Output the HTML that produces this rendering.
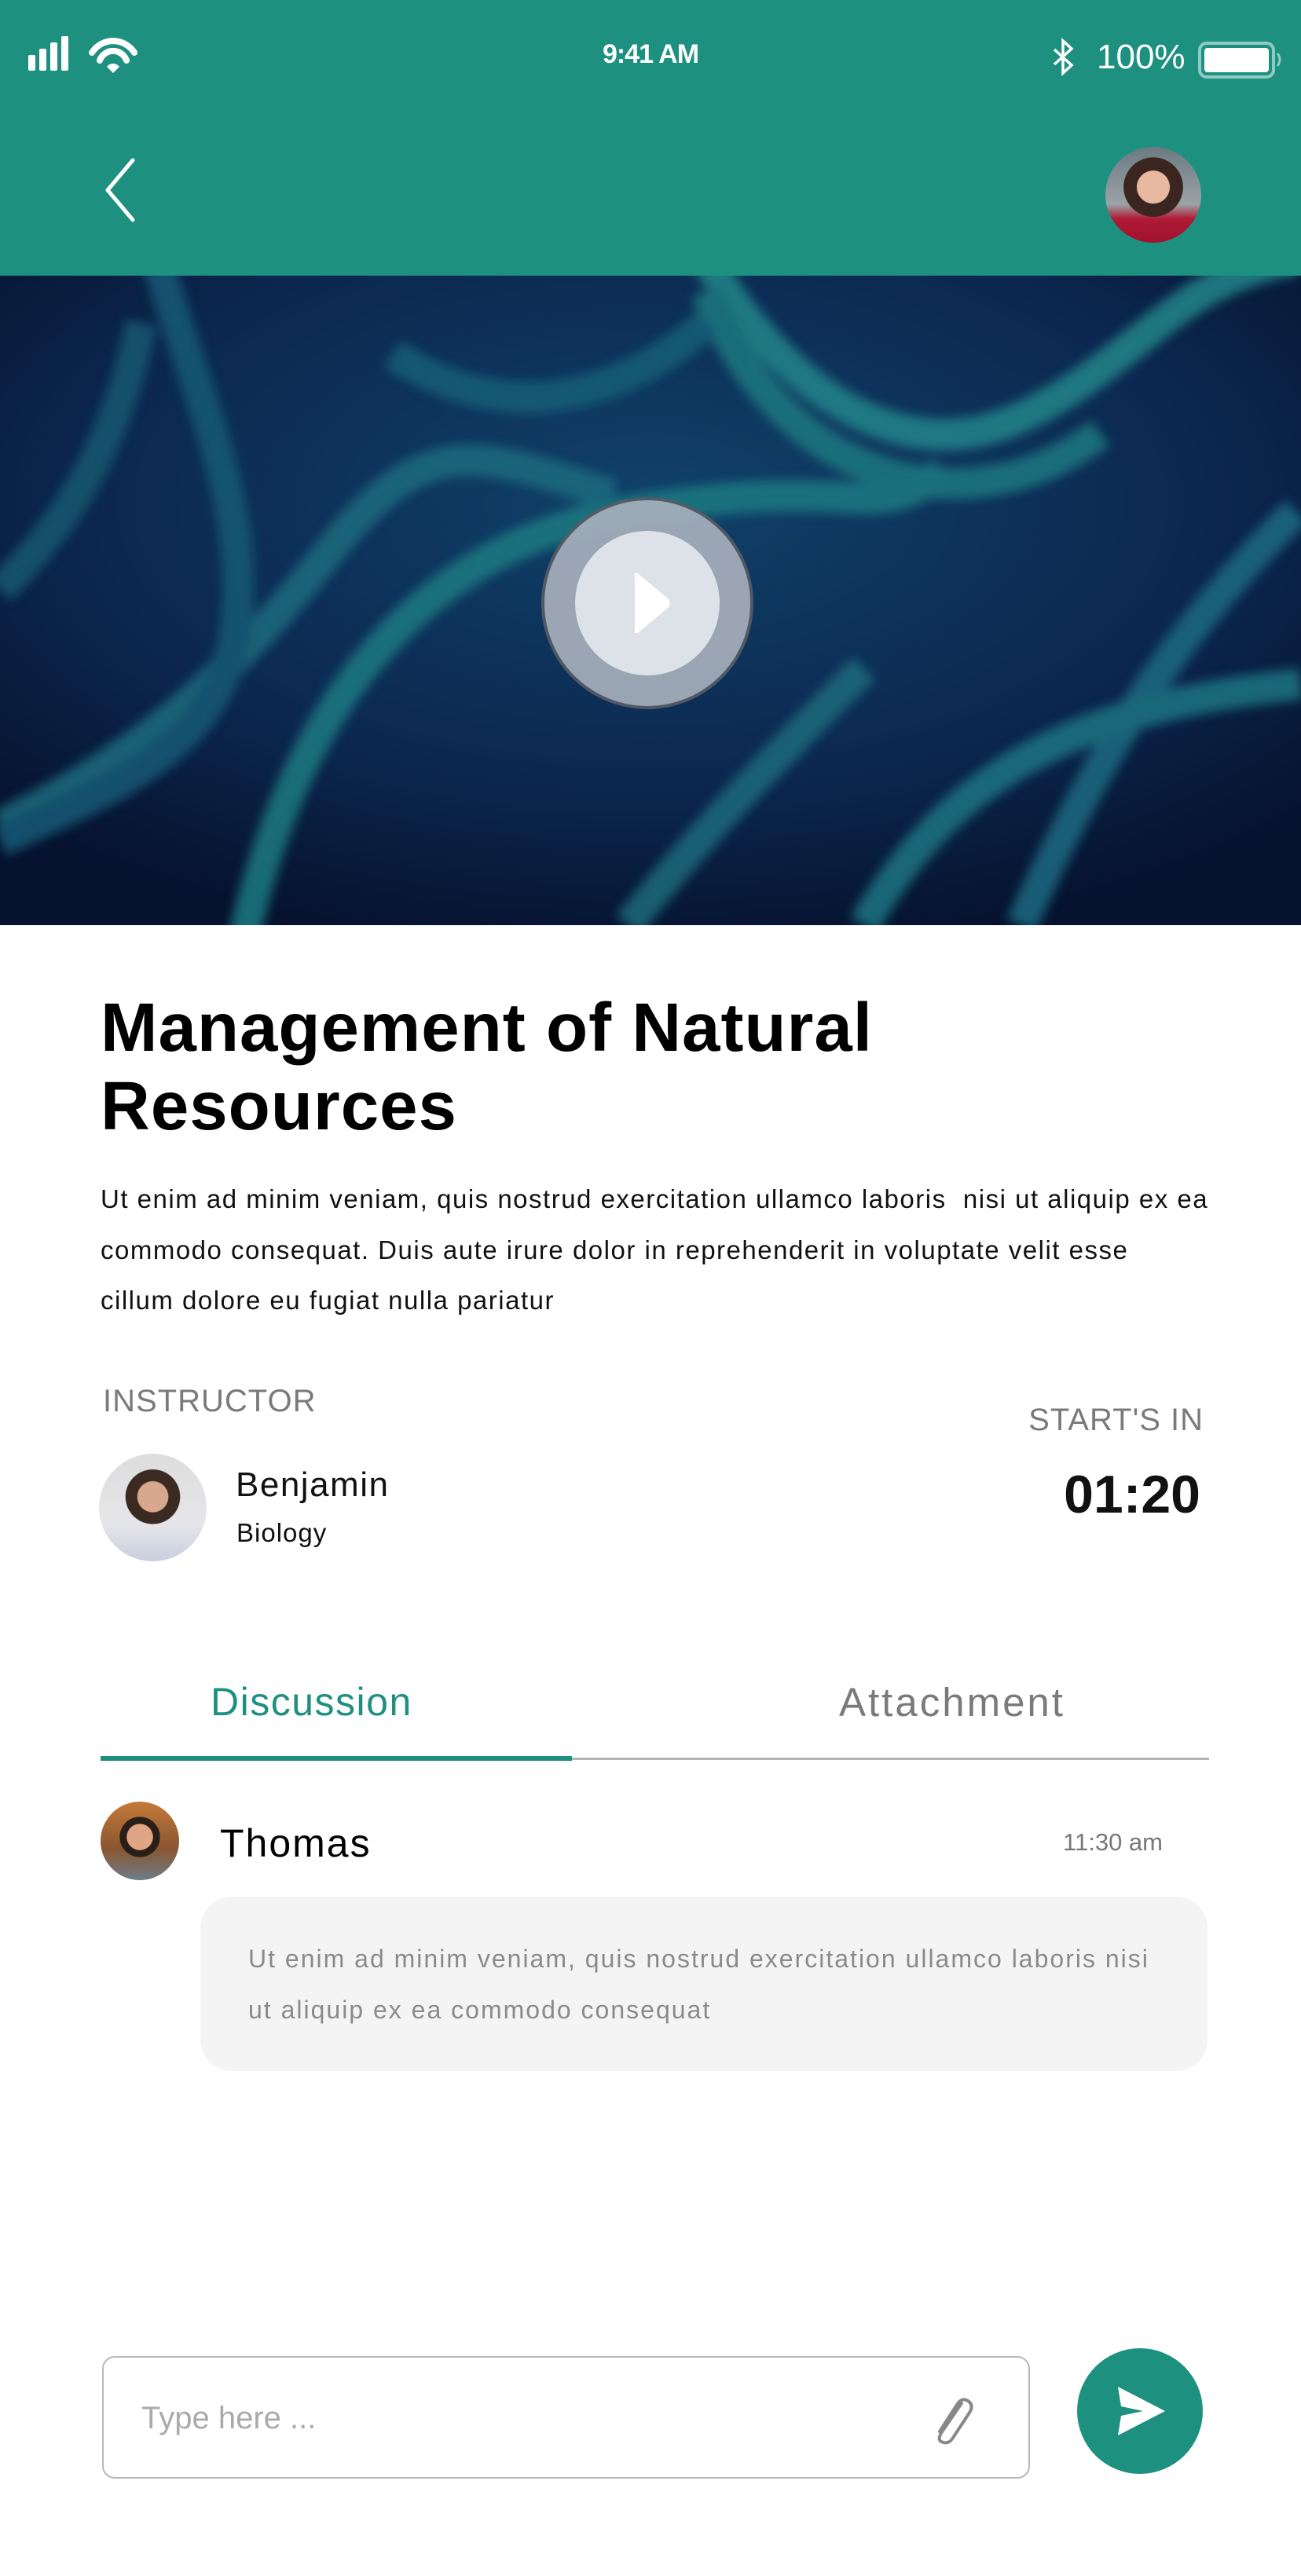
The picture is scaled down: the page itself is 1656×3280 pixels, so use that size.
<!DOCTYPE html>
<html><head><meta charset="utf-8"><style>
*{margin:0;padding:0;box-sizing:border-box}
body{width:1656px;height:3280px;position:relative;background:#fff;font-family:"Liberation Sans",sans-serif;overflow:hidden}
.a{position:absolute;white-space:nowrap}
</style></head><body>
<div class="a" style="left:0;top:0;width:1656px;height:352px;background:#1e9080"></div>
<!-- status bar -->
<svg class="a" style="left:0px;top:0px" width="1656" height="120" viewBox="0 0 1656 120">
 <rect x="36" y="70" width="9" height="20" rx="2" fill="#fff"/>
 <rect x="50" y="62" width="9" height="28" rx="2" fill="#fff"/>
 <rect x="64" y="54" width="9" height="36" rx="2" fill="#fff"/>
 <rect x="78" y="46" width="9" height="44" rx="2" fill="#fff"/>
 <path d="M117 67 A32 32 0 0 1 171 67" stroke="#fff" stroke-width="8" fill="none" stroke-linecap="round"/>
 <path d="M127 77 A18 18 0 0 1 161 77" stroke="#fff" stroke-width="8" fill="none" stroke-linecap="round"/>
 <path d="M136 85 L144 93 L152 85 A10 10 0 0 0 136 85Z" fill="#fff"/>
 <path d="M1342 63 L1364 83 L1353 93 L1353 52 L1364 62 L1342 82" stroke="#fff" stroke-width="3.5" fill="none"/>
 <rect x="1527" y="55" width="94" height="43" rx="9" fill="none" stroke="#8fcbc2" stroke-width="4"/>
 <rect x="1533" y="61" width="82" height="31" rx="4" fill="#fff"/>
 <path d="M1626 68 Q1632 76 1626 84" stroke="#8fcbc2" stroke-width="3" fill="none"/>
</svg>
<div class="a" style="left:0;width:1656px;top:50px;text-align:center;color:#fff;font-size:34px;font-weight:bold;letter-spacing:-1px">9:41 AM</div>
<div class="a" style="left:1396px;top:48px;color:#fff;font-size:44px">100%</div>
<!-- back -->
<svg class="a" style="left:125px;top:198px" width="60" height="86"><path d="M44 6 L12 44 L44 82" stroke="#fff" stroke-width="5" fill="none" stroke-linecap="round" stroke-linejoin="round"/></svg>
<!-- top avatar -->
<div class="a" style="left:1407px;top:187px;width:122px;height:122px;border-radius:50%;overflow:hidden;background:radial-gradient(circle at 50% 42%,#e8b9a0 0 22%,#3a2520 23% 40%,transparent 41%),linear-gradient(#6b7a82,#9aa3a6 60%,#b01a35 75%,#a0122d)"></div>
<!-- hero -->
<svg class="a" style="left:0px;top:351px" width="1656" height="827" viewBox="0 0 1656 827">
 <defs>
  <filter id="b"><feGaussianBlur stdDeviation="7"/></filter>
  <radialGradient id="g" cx="50%" cy="35%" r="70%"><stop offset="0" stop-color="#10416a"/><stop offset="0.6" stop-color="#0c2850"/><stop offset="1" stop-color="#06122e"/></radialGradient>
 </defs>
 <rect width="1656" height="827" fill="url(#g)"/>
 <g filter="url(#b)" fill="none" stroke-width="40" opacity="0.85">
  <path d="M900 -20 C1000 150 1150 250 1300 180 S1500 0 1650 -20" stroke="#22858a"/>
  <path d="M900 20 C1000 280 1250 320 1400 200" stroke="#1b7880"/>
  <path d="M300 900 C350 600 500 350 800 300 S1100 320 1200 250" stroke="#1f7a82"/>
  <path d="M0 700 C200 600 300 500 420 350 S600 220 780 280" stroke="#1c6c7e"/>
  <path d="M200 -20 C250 150 320 300 300 450 S150 650 0 720" stroke="#165a76"/>
  <path d="M1650 300 C1500 450 1400 600 1300 827" stroke="#1a6b82"/>
  <path d="M1100 827 C1200 650 1350 550 1656 520" stroke="#1e7582"/>
  <path d="M0 400 C100 300 150 200 180 60" stroke="#165870"/>
  <path d="M800 827 C900 700 1000 600 1100 500" stroke="#1a6b7c"/>
  <path d="M500 100 C650 200 800 150 900 60" stroke="#185f78"/>
 </g>
 <circle cx="824" cy="417" r="133" fill="#a7afbc" opacity="0.92" stroke="#555c66" stroke-width="4"/>
 <circle cx="824" cy="417" r="92" fill="#dde2e8"/>
 <path d="M808 384 Q806 376 813 380 L850 411 Q856 417 850 423 L813 454 Q806 458 808 450 Z" fill="#fff"/>
</svg>
<!-- title -->
<div class="a" style="left:128px;top:1259px;font-size:87px;font-weight:bold;line-height:100px;color:#000;letter-spacing:1px">Management of Natural<br>Resources</div>
<div class="a" style="left:128px;top:1495px;font-size:33px;line-height:64.5px;color:#111;letter-spacing:1.5px">Ut enim ad minim veniam, quis nostrud exercitation ullamco laboris &nbsp;nisi ut aliquip ex ea<br>commodo consequat. Duis aute irure dolor in reprehenderit in voluptate velit esse<br>cillum dolore eu fugiat nulla pariatur</div>
<div class="a" style="left:131px;top:1762px;font-size:40px;color:#7a7a7a;letter-spacing:1px">INSTRUCTOR</div>
<div class="a" style="right:124px;top:1786px;font-size:40px;color:#7a7a7a;letter-spacing:1px">START'S IN</div>
<div class="a" style="right:128px;top:1864px;font-size:68px;font-weight:bold;color:#111">01:20</div>
<div class="a" style="left:126px;top:1851px;width:137px;height:137px;border-radius:50%;background:radial-gradient(circle at 50% 40%,#d8a88e 0 18%,#3b2a22 19% 32%,transparent 33%),linear-gradient(#ddd,#e6e6ea 65%,#c9cede)"></div>
<div class="a" style="left:300px;top:1866px;font-size:44px;color:#111;letter-spacing:1.5px">Benjamin</div>
<div class="a" style="left:301px;top:1933px;font-size:33px;color:#111;letter-spacing:1px">Biology</div>
<!-- tabs -->
<div class="a" style="left:268px;top:2138px;font-size:50px;color:#1e9080;letter-spacing:1.5px">Discussion</div>
<div class="a" style="left:1068px;top:2138px;font-size:51px;color:#7a7a7a;letter-spacing:3px">Attachment</div>
<div class="a" style="left:128px;top:2238px;width:1411px;height:3px;background:#b3b3b3"></div>
<div class="a" style="left:128px;top:2236px;width:600px;height:6px;background:#1e9080"></div>
<!-- message -->
<div class="a" style="left:128px;top:2294px;width:100px;height:100px;border-radius:50%;background:radial-gradient(circle at 50% 45%,#e0a585 0 22%,#2a1e18 23% 34%,transparent 35%),linear-gradient(#c47a3a,#8a5630 60%,#6d7c8a)"></div>
<div class="a" style="left:280px;top:2318px;font-size:50px;color:#000;letter-spacing:2px">Thomas</div>
<div class="a" style="right:176px;top:2328px;font-size:31px;color:#777">11:30 am</div>
<div class="a" style="left:255px;top:2415px;width:1282px;height:222px;border-radius:40px;background:#f4f4f4"></div>
<div class="a" style="left:316px;top:2462px;font-size:32px;line-height:64.5px;color:#8a8a8a;letter-spacing:2px">Ut enim ad minim veniam, quis nostrud exercitation ullamco laboris nisi<br>ut aliquip ex ea commodo consequat</div>
<!-- input -->
<div class="a" style="left:130px;top:3000px;width:1181px;height:156px;border:2.5px solid #b8b8b8;border-radius:16px"></div>
<div class="a" style="left:180px;top:3057px;font-size:40px;color:#aaa">Type here ...</div>
<svg class="a" style="left:1176px;top:3052px" width="70" height="62" viewBox="0 0 70 62"><path d="M48 8 L22 46 Q16 56 25 58 Q32 60 37 52 L58 20 Q64 10 56 5 Q48 0 42 10 L20 44" stroke="#888" stroke-width="4" fill="none" stroke-linecap="round"/></svg>
<div class="a" style="left:1371px;top:2990px;width:160px;height:160px;border-radius:50%;background:#1e9080"></div>
<svg class="a" style="left:1371px;top:2990px" width="160" height="160"><path d="M52 49 L112 80 L52 111 L56 86 L84 80 L56 74 Z" fill="#fff"/></svg>
</body></html>
